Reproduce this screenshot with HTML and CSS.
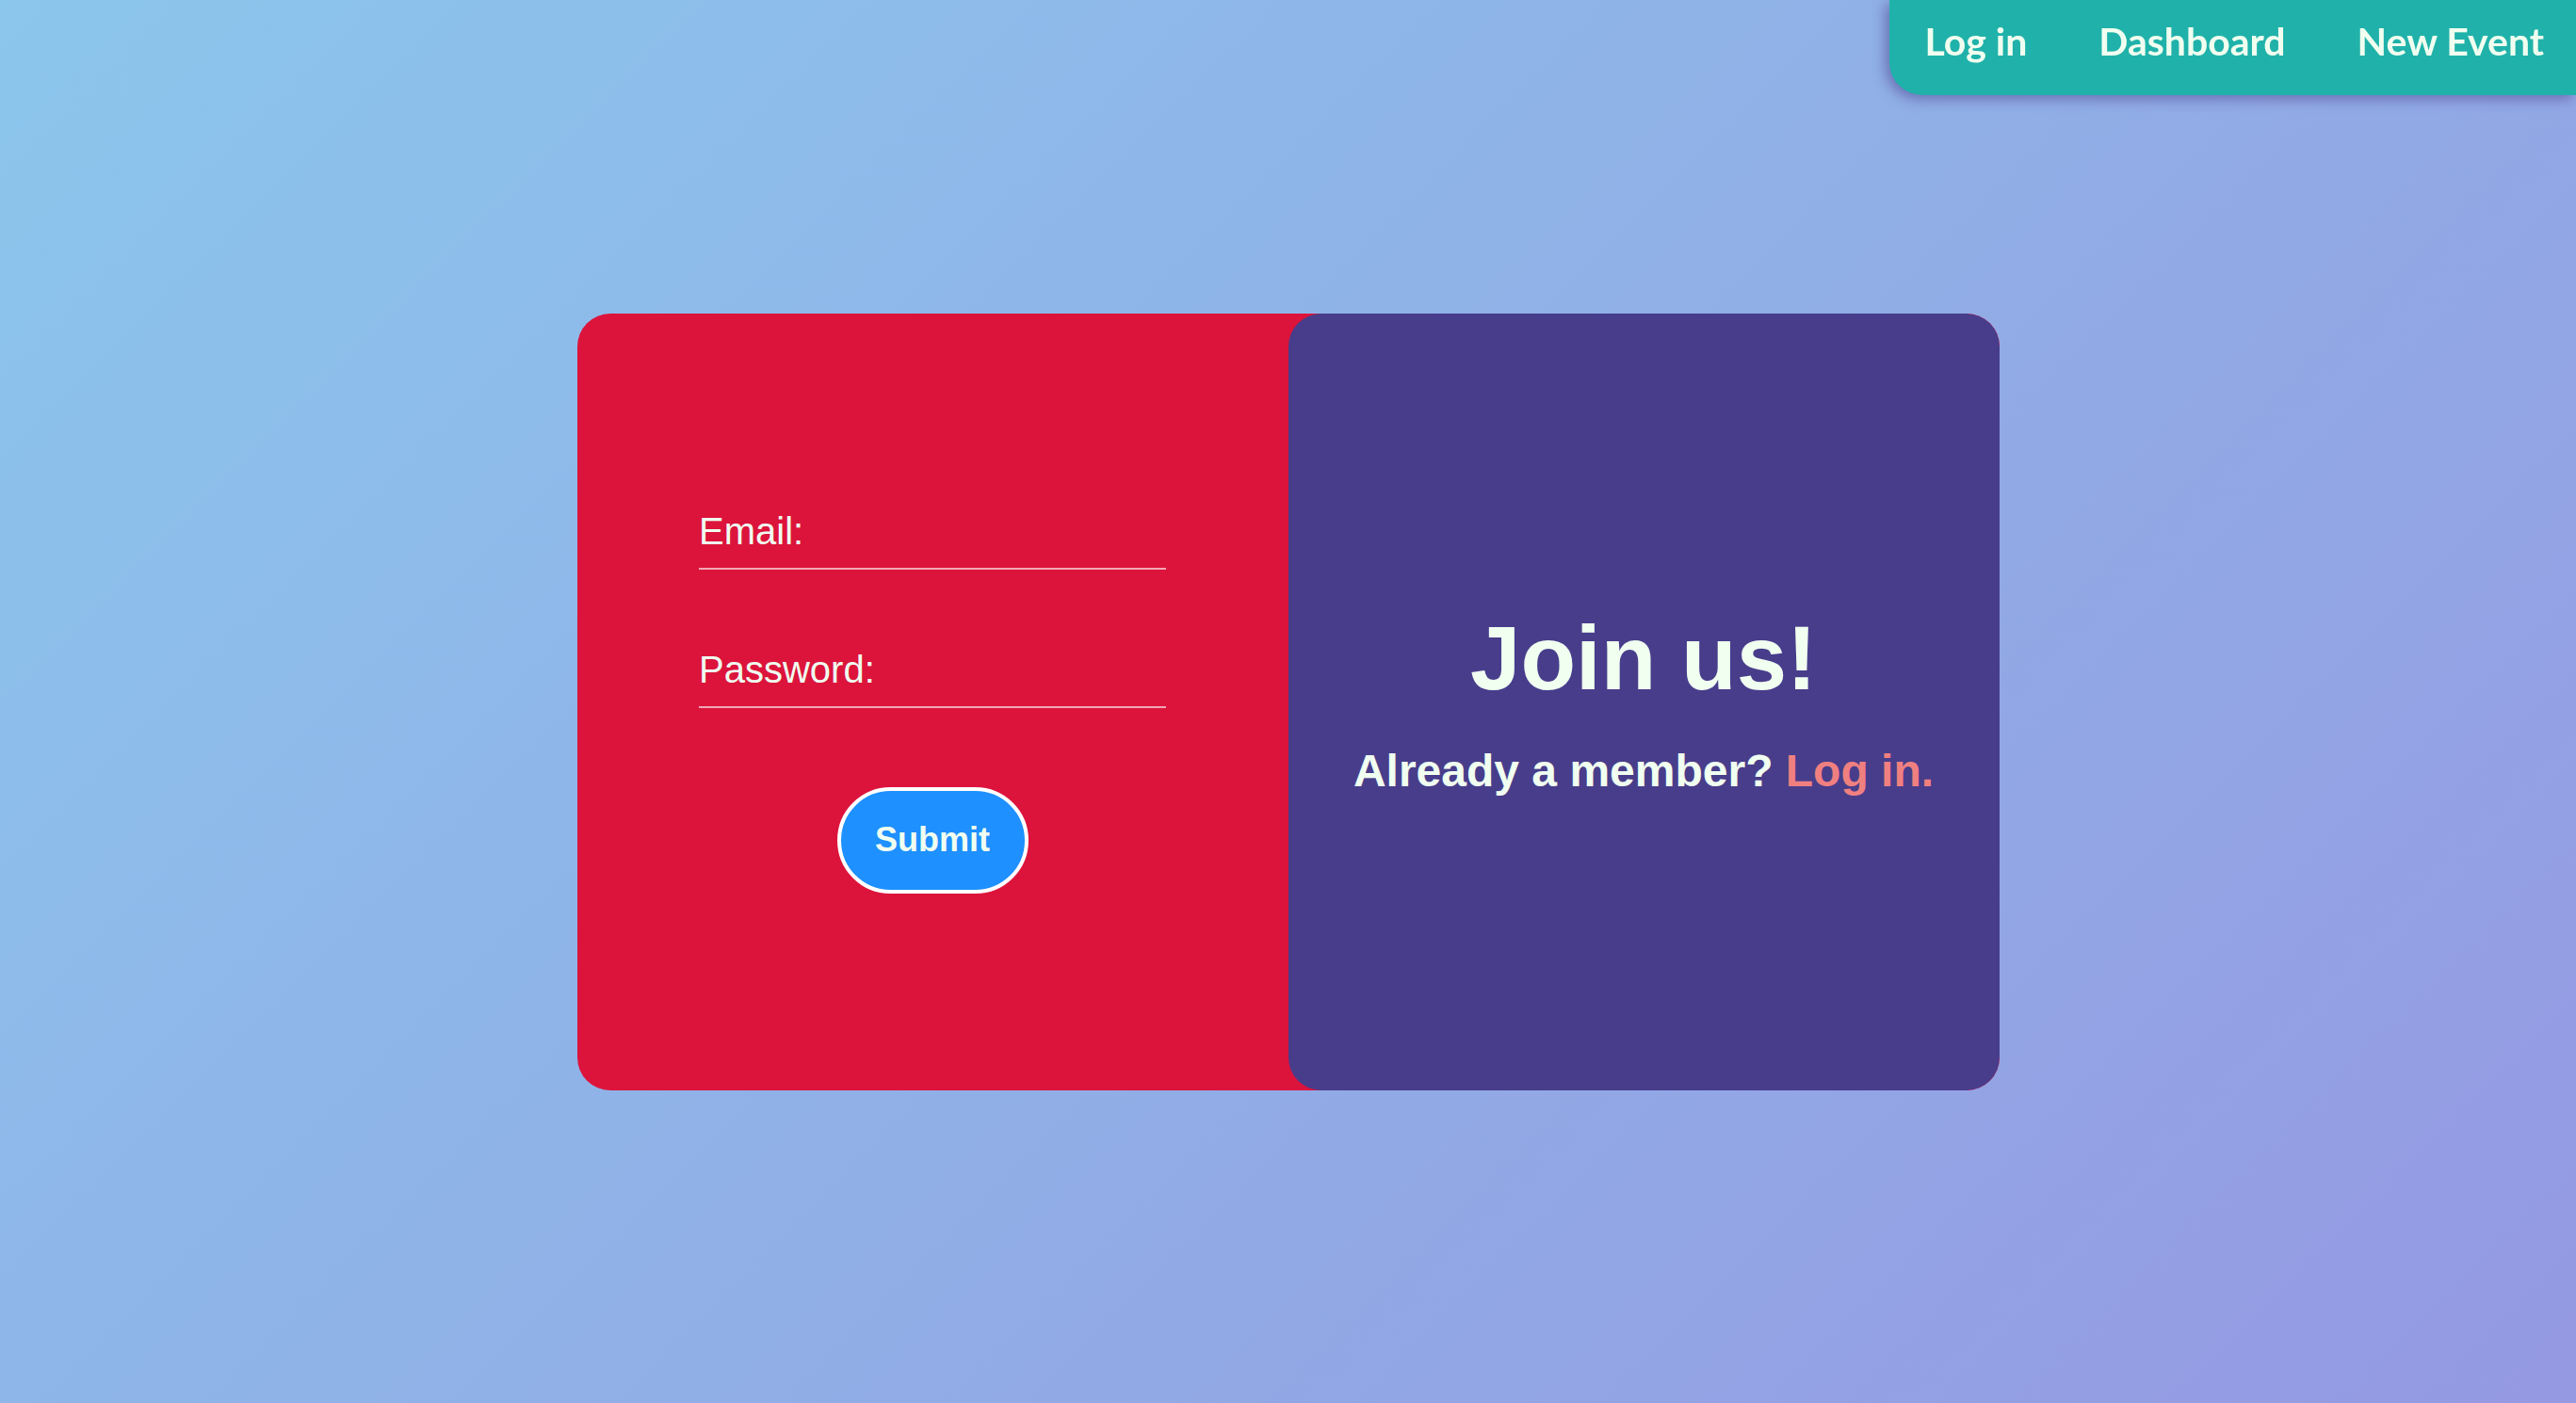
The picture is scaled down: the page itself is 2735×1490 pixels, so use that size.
FILE: index.html
```html
<!DOCTYPE html>
<html lang="en">
<head>
<meta charset="utf-8">
<title>Join us</title>
<link rel="stylesheet" href="styles.css">
</head>
<body>
<nav class="topnav">
  <a class="topnav-link" href="#">Log in</a>
  <a class="topnav-link" href="#">Dashboard</a>
  <a class="topnav-link" href="#">New Event</a>
</nav>
<main class="page">
  <section class="card">
    <div class="card-form">
      <form class="signup-form">
        <label class="field">
          <span class="field-label">Email:</span>
          <input class="field-input" type="email">
        </label>
        <label class="field field-password">
          <span class="field-label">Password:</span>
          <input class="field-input" type="password">
        </label>
        <button class="submit-btn" type="button">Submit</button>
      </form>
    </div>
    <div class="card-side">
      <h1 class="side-title">Join us!</h1>
      <p class="side-text">Already a member? <a class="side-link" href="#">Log in.</a></p>
    </div>
  </section>
</main>
</body>
</html>
```

FILE: styles.css
```css
* {
  box-sizing: border-box;
}

html, body {
  margin: 0;
  padding: 0;
  height: 100%;
}

body {
  background: linear-gradient(135deg, #8BC6EC 0%, #9599E2 100%);
  font-family: "Liberation Sans", Arial, sans-serif;
  color: #F0FFF0;
  overflow: hidden;
}

.topnav {
  position: fixed;
  top: 0;
  right: 0;
  display: flex;
  gap: 76px;
  padding: 19px 34px 33px 38px;
  background: #20B2AA;
  border-bottom-left-radius: 35px;
  box-shadow: -4px 4px 14px rgba(72, 61, 139, 0.55);
  z-index: 10;
}

.topnav-link {
  font-family: Lato, "Open Sans", sans-serif;
  font-weight: 700;
  font-size: 41px;
  line-height: 49px;
  color: #F0FFF0;
  text-decoration: none;
}

.page {
  height: 100%;
  display: flex;
  align-items: center;
  justify-content: center;
}

.card {
  width: 1510px;
  height: 825px;
  display: grid;
  grid-template-columns: 1fr 1fr;
  background: #DC143C;
  border-radius: 35px;
  overflow: hidden;
}

.card-form {
  display: flex;
  align-items: center;
  justify-content: center;
}

.signup-form {
  width: 496px;
  display: flex;
  flex-direction: column;
  margin-top: -1px;
}

.field {
  display: flex;
  align-items: baseline;
  padding-bottom: 16px;
  border-bottom: 2px solid rgba(255, 255, 255, 0.62);
}

.field-password {
  margin-top: 83px;
}

.field-label {
  font-size: 40px;
  line-height: 46px;
  color: #F0FFF0;
  white-space: nowrap;
}

.field-input {
  flex: 1;
  min-width: 0;
  border: none;
  outline: none;
  background: transparent;
  color: #F0FFF0;
  font-family: inherit;
  font-size: 36px;
  padding: 0 0 0 10px;
}

.submit-btn {
  align-self: center;
  margin-top: 84px;
  width: 203px;
  height: 113px;
  border: 4px solid #ffffff;
  border-radius: 60px;
  background: #1E90FF;
  color: #F0FFF0;
  font-family: "Liberation Sans", Arial, sans-serif;
  font-weight: 700;
  font-size: 36px;
  padding: 0;
  cursor: pointer;
}

.card-side {
  background: #483D8B;
  border-radius: 35px;
  display: flex;
  flex-direction: column;
  align-items: center;
  justify-content: center;
  gap: 37px;
}

.side-title {
  margin: 0;
  font-size: 96px;
  line-height: 110px;
  font-weight: 700;
  color: #F0FFF0;
}

.side-text {
  margin: 0;
  font-size: 48px;
  line-height: 56px;
  font-weight: 700;
  color: #F0FFF0;
}

.side-link {
  color: #F08080;
  text-decoration: none;
}
```
